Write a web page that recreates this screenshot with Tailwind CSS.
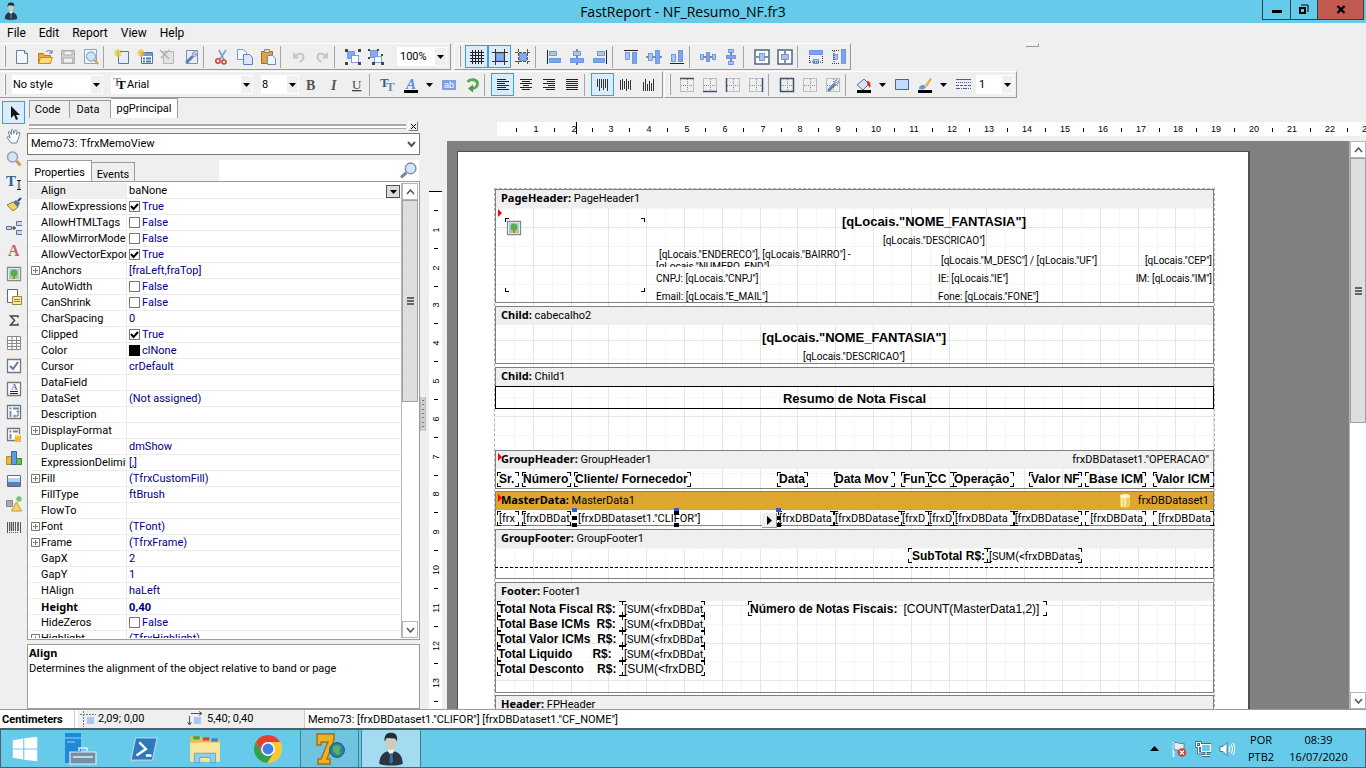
<!DOCTYPE html>
<html lang="en">
<head>
    <meta charset="UTF-8">
    <meta name="viewport" content="width=device-width, initial-scale=1.0">
    <title>FastReport - NF_Resumo_NF.fr3</title>
    <script src="https://cdn.jsdelivr.net/npm/@tailwindcss/browser@4"></script>
</head>
<body class="h-screen flex flex-col overflow-hidden bg-[#efefef] text-black text-[11px] leading-4 font-['Roboto','Liberation_Sans',sans-serif]">

    <!-- Title bar -->
    <header class="relative h-[23px] shrink-0 bg-[#66caea] flex items-center justify-center">
        <span class="absolute left-0.5 top-0.5" data-icon="person" data-size="18"></span>
        <h1 class="text-sm font-['Open_Sans',sans-serif]">FastReport - NF_Resumo_NF.fr3</h1>
        <div class="absolute right-0.5 top-0 h-5 flex border border-t-0 border-[#333f48]">
            <button aria-label="Minimize" class="w-7 border-r border-[#333f48] flex items-center justify-center"><span class="w-2.5 h-[3px] bg-black mt-1"></span></button>
            <button aria-label="Restore" class="w-[26px] flex items-center justify-center"><svg width="12" height="12" viewBox="0 0 12 12"><path d="M3 1h7v7" fill="none" stroke="#000"/><path d="M2 4h5v5H2z" fill="none" stroke="#000" stroke-width="2"/></svg></button>
            <button aria-label="Close" class="w-[46px] border-l border-[#333f48] bg-[#c35a50] flex items-center justify-center"><svg width="10" height="9" viewBox="0 0 10 9"><path d="M1.500 1l7 7M8.500 1l-7 7" stroke="#000" stroke-width="2.400"/></svg></button>
        </div>
    </header>

    <!-- Menu -->
    <nav class="h-5 shrink-0 flex items-center gap-[13px] pl-[7px] text-xs">
        <a href="#">File</a><a href="#">Edit</a><a href="#">Report</a><a href="#">View</a><a href="#">Help</a>
    </nav>

    <!-- Toolbars -->
    <div class="shrink-0 flex gap-[3px] h-[28px]">
        <div id="tbStandard" class="flex items-center border-t border-t-white border-b border-r border-[#9a9a9a] pr-[3px] h-[27px]"></div>
        <div id="tbAlign" class="flex items-center border-t border-l border-t-white border-l-white border-b border-r border-[#9a9a9a] h-[27px]"></div>
        <div class="w-[13px] h-1 ml-[172px] border-b border-r border-t border-t-white border-[#9a9a9a]"></div>
    </div>
    <div class="shrink-0 flex gap-px h-[27px]">
        <div id="tbText" class="flex items-center border-t border-t-white border-b border-r border-[#9a9a9a] h-[27px] pr-0.5"></div>
        <div id="tbFrame" class="flex items-center border-t border-l border-t-white border-l-white border-b border-r border-[#9a9a9a] pr-0.5 h-[27px]"></div>
    </div>

    <main class="flex-1 min-h-0 flex">
        <!-- Object tools -->
        <div id="tools" class="w-[27px] shrink-0 pt-[3px] pl-0.5 flex flex-col"></div>

        <!-- Left panel -->
        <section class="w-[393px] shrink-0 flex flex-col">
            <div class="flex items-end h-5 pl-0.5 shrink-0">
                <button class="h-[18px] w-[41px] border border-b-0 border-[#9b9b9b] pr-1">Code</button>
                <button class="h-[18px] w-[41px] border border-b-0 border-l-0 border-[#9b9b9b] pr-1">Data</button>
                <button class="h-5 w-[67px] border border-b-0 border-l-0 border-[#9b9b9b] bg-white">pgPrincipal</button>
            </div>
            <div class="h-[15px] shrink-0 flex items-center pt-px pl-0.5 gap-0.5 pr-0.5">
                <div class="flex-1 h-[5px] border-t-2 border-b border-[#a8a8a8] bg-white"></div>
                <button aria-label="Close panel" class="w-2.5 h-2.5 border border-white border-b-[#777] border-r-[#777] flex items-center justify-center"><svg width="7" height="7" viewBox="0 0 7 7"><path d="M1 1l5 5M6 1L1 6" stroke="#000"/></svg></button>
            </div>
            <div class="relative h-[22px] shrink-0">
                <select aria-label="Object" class="w-full h-full appearance-none bg-white border border-[#777] pl-[3px]"><option>Memo73: TfrxMemoView</option></select>
                <svg class="absolute right-1 top-2 pointer-events-none" width="9" height="7" viewBox="0 0 9 7"><path d="M1 1l3.500 4L8 1" fill="none" stroke="#555" stroke-width="2"/></svg>
            </div>
            <div class="h-[26px] shrink-0 flex items-end pr-px">
                <button class="h-[21px] w-[65px] border border-b-0 border-[#9b9b9b] bg-white pt-1">Properties</button>
                <button class="h-[19px] w-[43px] border border-b-0 border-l-0 border-[#9b9b9b] pt-1">Events</button>
                <div class="flex-1"></div>
                <div class="relative w-[200px] h-[21px] bg-white">
                    <input aria-label="Search" class="w-full h-full pr-5 outline-none">
                    <span class="absolute right-0.5 top-0.5" data-icon="search" data-size="17"></span>
                </div>
            </div>
            <div class="flex-1 min-h-0 flex border border-[#9b9b9b] bg-white p-px">
                <table class="block flex-1 overflow-hidden"><tbody id="props" class="block"></tbody></table>
                <div class="w-[17px] border-l border-[#b5b5b5] flex flex-col">
                    <button aria-label="Scroll up" class="h-[17px] shrink-0 border border-[#b5b5b5] flex items-center justify-center"><svg width="9" height="6" viewBox="0 0 9 6"><path d="M1 5l3.500-4L8 5" fill="none" stroke="#555" stroke-width="1.500"/></svg></button>
                    <div class="h-[202px] bg-[#dedede] border border-[#a0a0a0] flex flex-col items-center justify-center gap-px"><i class="w-[7px] h-0.5 bg-[#666]"></i><i class="w-[7px] h-0.5 bg-[#666]"></i><i class="w-[7px] h-0.5 bg-[#666]"></i></div>
                    <div class="flex-1"></div>
                    <button aria-label="Scroll down" class="h-[17px] shrink-0 border border-[#b5b5b5] flex items-center justify-center"><svg width="9" height="6" viewBox="0 0 9 6"><path d="M1 1l3.500 4L8 1" fill="none" stroke="#555" stroke-width="1.500"/></svg></button>
                </div>
            </div>
            <div class="mt-1 h-[65px] shrink-0 border border-[#9b9b9b] bg-white pl-px">
                <p class="font-bold font-['Noto_Sans',sans-serif]">Align</p>
                <p>Determines the alignment of the object relative to band or page</p>
            </div>
        </section>

        <!-- Splitter -->
        <div class="w-[7px] shrink-0 flex items-center pt-5"><div class="w-[6px] h-[34px] bg-[#cfcfcf] border-x border-[#bbb] flex flex-col items-center justify-evenly text-[#777]"><i class="w-0.5 h-px bg-current"></i><i class="w-0.5 h-px bg-current"></i><i class="w-0.5 h-px bg-current"></i><i class="w-0.5 h-px bg-current"></i><i class="w-0.5 h-px bg-current"></i><i class="w-0.5 h-px bg-current"></i><i class="w-0.5 h-px bg-current"></i></div></div>

        <!-- Designer -->
        <section class="flex-1 min-w-0 flex flex-col pt-6">
            <div class="h-[19px] shrink-0 pl-[70px]">
                <div id="hruler" class="relative h-3.5 bg-white overflow-hidden text-[9px] leading-[15px] font-['Liberation_Sans',sans-serif]"><i class="absolute left-[79px] top-0 w-px h-3 bg-black"></i></div>
            </div>
            <div class="flex-1 min-h-0 flex">
                <div class="w-5 shrink-0 pl-0.5 pt-[50px] flex">
                    <div id="vruler" class="relative w-[13px] bg-white border-t border-black overflow-hidden text-[9px] leading-[14px] font-['Liberation_Sans',sans-serif]"></div>
                </div>
                <div class="flex-1 min-w-0 bg-[#808080] pl-2.5 pt-2.5 overflow-hidden">
                    <div class="w-[793px] h-[1122px] bg-white border border-[#505050] border-r-2 pl-9 pt-9">
                        <div class="relative w-[721px] h-[1050px] border border-dashed border-[#b0b0b0]">
                            <svg id="grid" class="absolute left-0 top-0" width="719" height="1048" shape-rendering="crispEdges"></svg>
                            <div id="bands" class="relative w-[719px]"></div>
                        </div>
                    </div>
                </div>
                <div class="w-[17px] shrink-0 bg-white border-l border-[#b5b5b5] flex flex-col">
                    <button aria-label="Scroll up" class="h-[17px] shrink-0 border border-[#b5b5b5] flex items-center justify-center"><svg width="9" height="6" viewBox="0 0 9 6"><path d="M1 5l3.500-4L8 5" fill="none" stroke="#555" stroke-width="1.500"/></svg></button>
                    <div class="h-[265px] bg-[#dedede] border border-[#a0a0a0] flex flex-col items-center justify-center gap-px"><i class="w-[7px] h-0.5 bg-[#666]"></i><i class="w-[7px] h-0.5 bg-[#666]"></i><i class="w-[7px] h-0.5 bg-[#666]"></i></div>
                    <div class="flex-1"></div>
                    <button aria-label="Scroll down" class="h-[17px] shrink-0 border border-[#b5b5b5] flex items-center justify-center"><svg width="9" height="6" viewBox="0 0 9 6"><path d="M1 1l3.500 4L8 1" fill="none" stroke="#555" stroke-width="1.500"/></svg></button>
                </div>
            </div>
        </section>
    </main>

    <!-- Status bar -->
    <footer class="h-[19px] shrink-0 border-t border-[#9b9b9b] bg-white flex items-stretch leading-[20px]">
        <div class="w-[75px] shrink-0 pl-0.5 font-bold border-r border-[#ccc]">Centimeters</div>
        <div class="ml-[3px] w-[227px] shrink-0 bg-[#efefef] border-r border-[#ccc] flex items-center pl-0.5">
            <span data-icon="pos" data-size="16"></span><span class="w-[91px] pl-0.5">2,09; 0,00</span>
            <span data-icon="dim" data-size="16"></span><span class="pl-1">5,40; 0,40</span>
        </div>
        <div class="pl-[3px]">Memo73: [frxDBDataset1."CLIFOR"] [frxDBDataset1."CF_NOME"]</div>
    </footer>

    <!-- Taskbar -->
    <div class="h-10 shrink-0 border border-t-2 border-[#4f6068] bg-[#66caea] flex items-stretch">
        <button aria-label="Start" class="w-12 flex items-center justify-center" data-icon="windows" data-size="28"></button>
        <button aria-label="Server Manager" class="w-16 flex items-center justify-center" data-icon="server" data-size="32"></button>
        <button aria-label="PowerShell" class="w-[62px] flex items-center justify-center" data-icon="powershell" data-size="30"></button>
        <button aria-label="File Explorer" class="w-[60px] flex items-center justify-center" data-icon="explorer" data-size="34"></button>
        <button aria-label="Chrome" class="w-[65px] flex items-center justify-center" data-icon="chrome" data-size="30"></button>
        <button aria-label="Delphi 7" class="w-[59px] flex items-center justify-center border-x border-[#3f7e93] bg-[#6fc5e0]" data-icon="seven" data-size="32"></button>
        <button aria-label="FastReport" class="w-[60px] ml-0.5 flex items-center justify-center border-x border-[#3f7e93] bg-[#a3dcf1]" data-icon="person" data-size="34"></button>
        <div class="flex-1"></div>
        <div class="flex items-center gap-2 pr-0.5">
            <svg width="9" height="5" viewBox="0 0 9 5"><path d="M0 5l4.500-5L9 5z"/></svg>
            <span class="ml-1" data-icon="flag" data-size="16"></span>
            <span data-icon="network" data-size="16"></span>
            <span data-icon="speaker" data-size="16"></span>
        </div>
        <div class="w-12 text-center leading-[17px] pt-px font-['Open_Sans',sans-serif]">POR<br>PTB2</div>
        <div class="w-[67px] mr-[13px] text-center leading-[17px] pt-px font-['Open_Sans',sans-serif]">08:39<br>16/07/2020</div>
    </div>

    <script>
        // Icons, 16x16
        const L = '#a8c4f4', D = '#5d8ce0';
        const paper = '<path d="M2.500 1.500h8l3 3v10h-11z" fill="#f2f6fd" stroke="#6b7f9f"/><path d="M10.500 1.500v3h3" fill="#dde6f5" stroke="#6b7f9f"/>';
        const wrench = '<path d="M4 13l5-5" stroke="#5d7fb5" stroke-width="3" stroke-linecap="round"/><path d="M12.500 2.500l-2.200 2.200 1.200 1.300 2.200-2.200c.8 2.500-1.500 4.500-3.700 3.700-1.600-2.300.3-5.200 2.500-5z" fill="#c8d3e6" stroke="#6b7f9f" stroke-width=".7"/>';
        const star = '<path d="M4 0v8M0 4h8M1.200 1.200l5.600 5.600M6.800 1.200L1.200 6.800" stroke="#eac12f" stroke-width="1.200"/>';
        const box = (x, y, w, h, f) => `<rect x="${x}.5" y="${y}.5" width="${w}" height="${h}" fill="${f || L}" stroke="${D}" stroke-width=".8"/>`;
        const lines = (ws, al) => ws.map((w, i) => `<path d="M${al === 'r' ? 14 - w : al === 'c' ? 8 - w / 2 : 2} ${2.5 + i * 2}h${w}" stroke="#222"/>`).join('');
        const dots = '<path d="M1.500 1.500h13v13h-13zM8.500 2v12M2 8.500h12" fill="none" stroke="#888" stroke-dasharray="1 1"/>';
        const icons = {
            new: paper,
            open: '<path d="M1.500 4.500h5l1 2h6v8h-12z" fill="#e9a93a" stroke="#b97a1a"/><path d="M3.500 8.500h12l-2.500 6h-11.500z" fill="#fcdf7c" stroke="#c98b21"/><path d="M9 3c2-2 4-2 5.500.5M15 1v3h-3" fill="none" stroke="#4a6ea8"/>',
            save: '<path d="M1.500 1.500h13v13h-13z" fill="#d0d0d0" stroke="#aaa"/><path d="M4 2h8v4H4zM3.500 9h9v5h-9z" fill="#efefef" stroke="#b0b0b0"/>',
            preview: '<path d="M1.500.5h12v14h-12z" fill="#eef3fc" stroke="#8fa3c4"/><circle cx="8" cy="7.500" r="4.500" fill="#cfe3fa" stroke="#6f94c9"/><path d="M11.500 11l3.500 4" stroke="#d9a24a" stroke-width="2.400"/>',
            newpage: '<path d="M4.500 2.500h10v12h-10z" fill="#e6eefb" stroke="#5f7596"/>' + star,
            newdialog: '<path d="M4.500 3.500h11v11h-11z" fill="#fff" stroke="#4f74b0"/><path d="M5 4h10v3H5z" fill="#6f98dc"/><path d="M6 9.500h2M9 9.500h5M6 12.500h2M9 12.500h5" stroke="#4f74b0" stroke-width="2"/>' + star,
            del: '<path d="M3.500 2.500h10v12h-10z" fill="#e4e4e4" stroke="#b5b5b5"/><path d="M0 1l9 9M9 1L1 9" stroke="#b0b0b0" stroke-width="1.500"/>',
            pagesetup: '<path d="M3.500 1.500h11v13h-11z" fill="#e6eefb" stroke="#7b90b3"/>' + wrench,
            cut: '<path d="M5 1l5 10M12 1L6 10" stroke="#7fa5cf" stroke-width="1.800"/><circle cx="4" cy="12" r="2.200" fill="none" stroke="#d24232" stroke-width="1.600"/><circle cx="10" cy="13" r="2" fill="none" stroke="#d24232" stroke-width="1.600"/>',
            copy: '<path d="M.5.500h6l3 3v7h-9z" fill="#f4f8ff" stroke="#7d9ac9"/><path d="M6.500 5.500h6l3 3v7h-9z" fill="#dbe7fb" stroke="#5e7fb5"/>',
            paste: '<path d="M1.500 2.500h11v12h-11z" fill="#e0a146" stroke="#a86d1e"/><path d="M4.500.5h5v3h-5z" fill="#ddd" stroke="#888"/><path d="M7.500 6.500h5l3 3v6h-8z" fill="#eef4ff" stroke="#6b8ab8"/>',
            undo: '<path d="M3 4v4.500h4.500M4 8c2-4.500 8.500-4 8.500 0 0 2.500-1.500 4-4 5" fill="none" stroke="#c6c6c6" stroke-width="2"/>',
            redo: '<path d="M13 4v4.500H8.500M12 8C10 3.500 3.500 4 3.500 8c0 2.500 1.500 4 4 5" fill="none" stroke="#c6c6c6" stroke-width="2"/>',
            group: box(2, 2, 7, 7, '#86aaf0') + box(6, 6, 7, 7, '#fff') + '<path d="M0 0h3v3H0zM13 0h3v3h-3zM0 13h3v3H0zM13 13h3v3h-3z" fill="#444"/>',
            ungroup: box(2, 1, 7, 7, '#86aaf0') + box(6, 7, 7, 6, '#fff') + '<path d="M0 0h2v2H0zM9 0h2v2H9zM0 8h2v2H0zM13 5h2v2h-2zM4 13h3v3H4zM13 13h3v3h-3z" fill="#444"/>',
            grid: '<path d="M3.500 1v14M6.500 1v14M9.500 1v14M12.500 1v14M1 3.500h14M1 6.500h14M1 9.500h14M1 12.500h14" stroke="#222"/>',
            snap: '<path d="M3.500 0v16M12.500 0v16M0 3.500h16M0 12.500h16" stroke="#333"/>' + box(4, 4, 7, 7, '#86aaf0'),
            fit: '<path d="M3.500 0v16M12.500 0v16M0 3.500h16M0 12.500h16" stroke="#555" stroke-dasharray="3 1"/>' + box(4, 4, 7, 7, '#86aaf0'),
            aleft: '<path d="M1.500 1v14" stroke="#222"/>' + box(3, 2, 7, 4) + box(3, 9, 11, 4, '#7ea4ec'),
            acenter: '<path d="M8 0v16" stroke="#222"/>' + box(4, 2, 7, 4) + box(1, 9, 13, 4, '#7ea4ec'),
            aright: '<path d="M14.500 1v14" stroke="#222"/>' + box(5, 2, 7, 4) + box(1, 9, 11, 4, '#7ea4ec'),
            atop: '<path d="M1 1.500h14" stroke="#222"/>' + box(2, 3, 4, 7) + box(9, 3, 4, 11, '#7ea4ec'),
            amid: '<path d="M0 8h16" stroke="#222"/>' + box(2, 4, 4, 7) + box(9, 1, 4, 13, '#7ea4ec'),
            abot: '<path d="M1 14.500h14" stroke="#222"/>' + box(2, 5, 4, 7) + box(9, 1, 4, 11, '#7ea4ec'),
            hspace: '<path d="M0 8h16" stroke="#222"/>' + box(0, 5, 3, 5) + box(6, 3, 3, 9, '#7ea4ec') + box(12, 5, 3, 5),
            vspace: '<path d="M8 0v16" stroke="#222"/>' + box(5, 0, 5, 3) + box(3, 6, 9, 3, '#7ea4ec') + box(5, 12, 5, 3),
            hcenter: '<path d="M1 1h14v14H1z" fill="#fff" stroke="#53657f" stroke-width="1.500"/><path d="M2 8h12" stroke="#222"/>' + box(5, 4, 5, 7),
            vcenter: '<path d="M1 1h14v14H1z" fill="#fff" stroke="#53657f" stroke-width="1.500"/><path d="M8 2v12" stroke="#222"/>' + box(4, 5, 7, 5),
            samew: box(1, 1, 13, 4, '#7ea4ec') + box(5, 10, 5, 4) + '<path d="M1.500 7v7M14.500 7v7M2 13h12" stroke="#333" stroke-dasharray="1 1"/>',
            sameh: box(10, 0, 4, 14, '#7ea4ec') + box(2, 5, 4, 5) + '<path d="M1 1.500h8M1 14.500h8M3 2v12" stroke="#333" stroke-dasharray="1 1"/>',
            bold: '<text x="3" y="13" font-family="Liberation Serif" font-size="14" font-weight="bold" fill="#555">B</text>',
            italic: '<text x="5" y="13" font-family="Liberation Serif" font-size="14" font-style="italic" font-weight="bold" fill="#555">I</text>',
            underline: '<text x="3" y="12" font-family="Liberation Serif" font-size="13" text-decoration="underline" fill="#444">U</text>',
            fontdlg: '<text x="0" y="10" font-family="Liberation Serif" font-size="13" font-weight="bold" fill="#3d5a80">T</text><text x="6" y="14" font-family="Liberation Serif" font-size="13" font-weight="bold" fill="#6f8fb8">T</text>',
            truetype: '<text x="0" y="10" font-family="Liberation Serif" font-size="12" font-weight="bold" fill="#999">T</text><text x="4" y="13" font-family="Liberation Serif" font-size="13" font-weight="bold">T</text>',
            color: '<text x="3" y="12" font-family="Liberation Serif" font-size="15" font-weight="bold" font-style="italic" fill="#5f8fe0">A</text><path d="M1 13h14v3H1z"/>',
            ab: '<path d="M1 3h14v10H1z" fill="#7d9fe6"/><text x="3" y="11" font-family="Liberation Sans" font-size="9" fill="#fff">ab</text>',
            rotate: '<path d="M3.500 5c3-4 10-2.500 10 1.500 0 3-2 4.500-5 5" fill="none" stroke="#5aa854" stroke-width="2.800"/><path d="M9 7.500v8L4 11.500z" fill="#4a9a48"/>',
            tleft: lines([9, 12, 8, 12, 9, 12], 'l'), tcenter: lines([12, 8, 12, 6, 12, 8], 'c'), tright: lines([12, 8, 12, 7, 12, 9], 'r'), tjust: lines([12, 12, 12, 12, 12, 12], 'l'),
            vtop: '<path d="M2.500 2v8M4.500 2v12M6.500 2v9M8.500 2v11M10.500 2v9M12.500 2v12" stroke="#333"/>',
            vmid: '<path d="M2.500 3v10M4.500 2v11M6.500 4v8M8.500 2v12M10.500 4v8M12.500 3v10" stroke="#333"/>',
            vbot: '<path d="M2.500 5v9M4.500 2v12M6.500 7v7M8.500 4v10M10.500 6v8M12.500 2v12" stroke="#333"/>',
            ftop: dots + '<path d="M1 1.500h14" stroke="#3f5270" stroke-width="1.500"/>', fbot: dots + '<path d="M1 14.500h14" stroke="#3f5270" stroke-width="1.500"/>',
            fleft: dots + '<path d="M1.500 1v14" stroke="#3f5270" stroke-width="1.500"/>', fright: dots + '<path d="M14.500 1v14" stroke="#3f5270" stroke-width="1.500"/>',
            fall: dots + '<path d="M1.500 1.500h13v13h-13z" fill="none" stroke="#3f5270" stroke-width="1.500"/>', fnone: dots, fedit: dots + wrench,
            fill: '<path d="M1 8l7-6 5 5-6 6z" fill="#d8e3f2" stroke="#5c7190"/><path d="M11 4c4 0 4 4 3 7l-3-4z" fill="#d23a20"/><path d="M1 13h14v3H1z"/>',
            rect: '<path d="M1.500 2.500h13v10h-13z" fill="#c5dafa" stroke="#49679c"/>',
            pen: '<path d="M2 12c0-4 3-4 5-4l2 2c-1 2-3 3-7 2z" fill="#6f98c8"/><path d="M8 8l5-7 2 1-5 8z" fill="#e2b55c"/><path d="M1 13h14v3H1z"/>',
            style: '<path d="M1 2.500h15" stroke="#3f62a8"/><path d="M1 5.500h15" stroke="#3f62a8" stroke-dasharray="1 1"/><path d="M1 8.500h15" stroke="#3f62a8" stroke-dasharray="3 1"/><path d="M1 11.500h15" stroke="#3f62a8" stroke-dasharray="4 1 1 1"/>',
            arrow: '<path d="M5 1v12l3-3 2 5 2-1-2-4h4z" fill="#111"/>',
            hand: '<path d="M5 15L1 9.500c0-1.500 2-1 3 .5L2.500 4c.5-1.500 2-.5 2.800 2.500L5.500 2c.8-1.500 2-.5 2.300 3.500L9.500 2c1.500-.8 1.500 1 1 4.500l2.500-2.500c1.500 0 .5 3-.5 6l-2 5z" fill="#fff" stroke="#5b7395" stroke-width=".9"/>',
            zoom: '<circle cx="6.500" cy="6" r="5" fill="#d5e6fb" stroke="#93a4bb" stroke-width="1.500"/><path d="M10.500 10l4 4.500" stroke="#c9a04c" stroke-width="3"/>',
            search: '<circle cx="10" cy="6" r="5" fill="#d5e6fb" stroke="#7c8ea9" stroke-width="1.300"/><path d="M6 10l-5 4.500" stroke="#76889f" stroke-width="3"/>',
            textcur: '<text x="0" y="12" font-family="Liberation Serif" font-size="15" font-weight="bold" fill="#2f5f96">T</text><path d="M11 6.500h4M11 15.500h4M13 7v8" stroke="#222"/>',
            brush: '<path d="M1 8l6-3 5 5-5 4z" fill="#f3d45e" stroke="#8a7a3c"/><path d="M7 5l3-2 4 3-2 4z" fill="#5274ad"/><path d="M12 4l3-3" stroke="#445" stroke-width="2"/>',
            bands: '<path d="M.5 6.500h5v3h-5zM16 1.500h-5.500v4H16M16 10.500h-5.500v4H16" fill="#c5dafa" stroke="#5b7395"/><path d="M6 8h4M8 6v4" stroke="#222"/>',
            letterA: '<text x="2" y="13" font-family="Liberation Serif" font-size="16" font-weight="bold" fill="#d0605a">A</text>',
            picture: '<path d="M1.500 1.500h13v13h-13z" fill="#fff" stroke="#888" stroke-width="1.300"/><path d="M3 3h10v10H3z" fill="#9fd0f2"/><path d="M3 10h10v3H3z" fill="#a5cf8f"/><circle cx="8" cy="7" r="3.500" fill="#5cac4a"/><path d="M7 10h2v3H7z" fill="#c97c35"/>',
            subreport: '<path d="M1.500.5h10v13h-10z" fill="#fff" stroke="#667"/><path d="M6.500 7.500h9v8h-9z" fill="#fbe9a0" stroke="#9a8437"/><path d="M8 10.500h6M8 12.500h6" stroke="#9a8437"/>',
            sigma: '<path d="M12 5.500V4H4.500l4 4.500-4 4.500H12v-1.500" fill="none" stroke="#444" stroke-width="1.500"/>',
            table: '<path d="M1.500 1.500h13v13h-13zM1 5.500h14M1 8.500h14M1 11.500h14M6 1v14M10.500 1v14" fill="#fff" stroke="#888"/>',
            check: '<path d="M1.500 1.500h13v13h-13z" fill="#fff" stroke="#777" stroke-width="1.300"/><path d="M4 8l3 3 5-7" fill="none" stroke="#5478b8" stroke-width="2"/>',
            rich: '<path d="M1.500 1.500h13v13h-13z" fill="#fff" stroke="#777" stroke-width="1.300"/><text x="5" y="9" font-family="Liberation Serif" font-size="9" font-weight="bold" fill="#5478b8">A</text><path d="M4 10.500h8M4 12.500h8" stroke="#222"/>',
            cross: '<path d="M1.500 1.500h13v13h-13z" fill="#fff" stroke="#777" stroke-width="1.300"/><path d="M3.500 4.500h2M7 4.500h6M4.500 7v6" stroke="#5f86ba" stroke-width="1.800" fill="none"/><path d="M12 7v5H8M10.500 8L12 6.500 13.500 8M9 10.500L7.500 12 9 13.500" stroke="#4b6f9f" fill="none"/>',
            dbcross: '<path d="M1.500 1.500h12v12h-12z" fill="#fff" stroke="#777" stroke-width="1.300"/><path d="M3.500 4.500h2M7 4.500h5M4.500 7v5" stroke="#5f86ba" stroke-width="1.800"/><path d="M9 8h6v7H9z" fill="#f0bb3c"/><ellipse cx="12" cy="8" rx="3" ry="1.300" fill="#ffe9a5"/>',
            chart: '<path d="M.5 6.500h5v8h-5z" fill="#eab738" stroke="#b88a1a"/><path d="M5.500 1.500h5v13h-5z" fill="#5f9ae0" stroke="#3768a8"/><path d="M10.500 8.500h5v6h-5z" fill="#68bb5a" stroke="#3f8a3a"/>',
            gradient: '<path d="M1.500 2.500h13v11h-13z" fill="#fff" stroke="#667"/><path d="M2 5h12v4H2z" fill="#b5d2f3"/><path d="M2 9h12v4H2z" fill="#4f83bd"/>',
            shapes: '<path d="M.5 4.500h6v6h-6z" fill="#aaa" stroke="#888"/><circle cx="13" cy="3" r="2.700" fill="#79c279"/><path d="M10.500 6l5 9h-10z" fill="#f7d36a" stroke="#c99a2c"/>',
            barcode: '<path d="M1.500 3v11M3.500 3v9M7.500 3v9M9.500 3v9M14.500 3v11" stroke="#555"/><path d="M5.500 3v9M12 3v9" stroke="#555" stroke-width="1.600"/><path d="M3 13.500h10" stroke="#555" stroke-dasharray="1 1"/>',
            pos: '<path d="M0 3.500h16M3.500 0v16" stroke="#777" stroke-dasharray="2 1"/><path d="M7 6h7v7H7z" fill="#a9c6f5"/>',
            dim: '<path d="M4 2.500h11M12 .5l3 2-3 2M2.500 5v9M.5 11l2 3 2-3" fill="none" stroke="#555"/><path d="M7 6h7v7H7z" fill="#a9c6f5"/>',
            db: '<path d="M3 3v10c0 2 10 2 10 0V3z" fill="#f2cf5c"/><path d="M5 4v10M8 4v10" stroke="#fff3c0" stroke-width="1.500"/><ellipse cx="8" cy="3" rx="5" ry="2" fill="#fff6cf"/>',
            windows: '<path d="M1 3l6-1v5.700H1zM7.600 1.900L15 1v6.700H7.600zM1 8.300h6V14l-6-1zM7.600 8.300H15V15l-7.400-.9z" fill="#fff"/>',
            server: '<path d="M0 0h8v15H0z" fill="#2089d8"/><path d="M0 2.500h8M1 4.500h4" stroke="#9fd3f3" stroke-width=".6"/><path d="M2.500 9.500h13v6h-13z" fill="#7390a5" stroke="#dfeef5" stroke-width=".6"/><path d="M7 9V7.500h4V9M4 12h10" fill="none" stroke="#dfeef5" stroke-width=".7"/>',
            powershell: '<path d="M3.500 2H15l-2.500 12H1z" fill="#2d78b8" stroke="#a9cfe8" stroke-width=".7"/><path d="M5.500 4.500L9 8l-5 3.500M9 11.500h3" fill="none" stroke="#fff" stroke-width="1.300"/>',
            explorer: '<path d="M1 2h5l1 1.500h8V14H1z" fill="#e6be55"/><path d="M2.500 2h3v1.500h-3z" fill="#3aa353"/><path d="M7 2.500h3V4H7z" fill="#d0482f"/><path d="M11 3h3v1.500h-3z" fill="#2d85d0"/><path d="M1 5h14v9H1z" fill="#fae69c"/><path d="M3 14.500V10h10v4.500h-2.500V12h-5v2.500z" fill="#8fd0ee" stroke="#5c9fc8" stroke-width=".4"/>',
            chrome: '<circle cx="8" cy="8" r="7.500" fill="#fcc934"/><path d="M1.500 4.200A7.500 7.500 0 0 1 14.500 4.300H8L4.800 10z" fill="#e3412f"/><path d="M1.500 4.200A7.500 7.500 0 0 0 7.500 15.500L11.200 10H4.800z" fill="#30a152"/><circle cx="8" cy="8" r="3.700" fill="#fff"/><circle cx="8" cy="8" r="2.900" fill="#3f7fe8"/>',
            seven: '<path d="M1.500.5H10v3L6.500 13H8v2.500H2V13h1.500L7 4.500H3.500V6h-2z" fill="#edb127" stroke="#a66d10" stroke-width=".7"/><circle cx="11.500" cy="8.500" r="3.700" fill="#2e7fa5" stroke="#1f5570" stroke-width=".5"/><path d="M9.500 7l2-1 2 1-1 2 1 1-2 1-2-2z" fill="#57b35c"/>',
            person: '<path d="M2.500 15c0-4 2-5.500 4-6h3c2 .5 4 2 4 6-3 1-8 1-11 0z" fill="#2b3543"/><path d="M6.500 9L8 11l1.500-2L9 8H7z" fill="#f3f3f3"/><path d="M7.600 10h1l.4 4-.9 1-.9-1z" fill="#3f6fae"/><path d="M5.500 3.500h4.800c.2 3-1 5-2.300 5s-2.500-2-2.500-5z" fill="#dcc7b0"/><path d="M5 4.500C4.700 1.500 6 .4 8 .4s3.300 1 2.800 4.100L10 3 6 2.800z" fill="#2a2a30"/>',
            flag: '<path d="M2.500 1v15" stroke="#fff" stroke-width="1.500"/><path d="M3 2c3-2 5 2 10 0v7c-5 2-7-1-10 0z" fill="#dff2fa" stroke="#3f6070" stroke-width=".7"/><circle cx="11" cy="11.500" r="4.300" fill="#d83a2c"/><path d="M9 9.500l4 4M13 9.500l-4 4" stroke="#fff" stroke-width="1.400"/>',
            network: '<path d="M6.500 3.500h9v7h-9zM11 11v3M7 14.500h8" fill="none" stroke="#24505f" stroke-width="2.400"/><path d="M1.500 1.500h4v4h-4zM3.500 6v6h4" fill="none" stroke="#24505f" stroke-width="2.400"/><path d="M6.500 3.500h9v7h-9zM11 11v3M7 14.500h8" fill="#66caea" stroke="#fff" stroke-width="1.200"/><path d="M1.500 1.500h4v4h-4zM3.500 6v6h4" fill="none" stroke="#fff" stroke-width="1.200"/>',
            speaker: '<path d="M1 5.500h3l4-4v13l-4-4H1z" fill="#fff" stroke="#34606f" stroke-width=".8"/><path d="M10 5c1 2 1 4 0 6M12 3.500c2 3 2 6 0 9M14 2c2.500 4 2.500 8 0 12" fill="none" stroke="#fff" stroke-width="1.100"/>'
        };
        const svg = (name, size = 16) => `<svg class="block shrink-0" width="${size}" height="${size}" viewBox="0 0 16 16">${icons[name]}</svg>`;
        document.querySelectorAll('[data-icon]').forEach(el => { el.innerHTML = svg(el.dataset.icon, el.dataset.size); });

        // Toolbars: "|" separator, "*" pressed, "v" small drop-down arrow, "#" combo box
        const caret = '<svg class="pointer-events-none" width="7" height="4" viewBox="0 0 7 4"><path d="M0 0h7L3.500 4z"/></svg>';
        const combos = {
            zoom: ['ml-[10px] w-[50px]', 'pl-[3px]', '100%', 'Zoom'], style: ['ml-0.5 w-[91px]', 'pl-px', 'No style', 'Style'],
            font: ['ml-2 w-[142px]', 'pl-4', 'Arial', 'Font'], size: ['ml-2 w-[38px]', 'pl-px', '8', 'Font size'], width: ['ml-0.5 w-[38px]', 'pl-[3px]', '1', 'Frame width']
        };
        function toolbar(id, spec) {
            document.getElementById(id).innerHTML = '<i class="h-[21px] w-0.5 mx-1 border-l border-l-white border-r border-r-[#9a9a9a]"></i>' + spec.split(' ').map(t => {
                if (t === '|') return '<i class="w-2 h-[22px] shrink-0"><b class="block w-px h-full bg-[#a5a5a5] ml-px"></b></i>';
                if (t === 'v') return `<button aria-label="More" class="w-[15px] h-[23px] flex items-center justify-center">${caret}</button>`;
                if (t[0] === '#') {
                    const [box, pad, text, label] = combos[t.slice(1)];
                    const tt = t === '#font' ? `<span class="absolute left-0.5 top-px">${svg('truetype')}</span>` : '';
                    return `<span class="relative h-[19px] bg-white ${box}"><select aria-label="${label}" class="appearance-none w-full h-full leading-[19px] ${pad}"><option>${text}</option></select>${tt}<span class="absolute right-px top-px bottom-px w-[11px] bg-[#efefef] flex items-center justify-center pointer-events-none">${caret}</span></span>`;
                }
                const on = t[0] === '*', name = t.replace('*', '');
                return `<button aria-label="${name}" class="w-[23px] h-[23px] flex items-center justify-center ${on ? 'border border-[#35a3dd] bg-[#dcebfc]' : ''}">${svg(name)}</button>`;
            }).join('');
        }
        toolbar('tbStandard', 'new open save preview | newpage newdialog del pagesetup | cut copy paste | undo redo | group ungroup #zoom');
        toolbar('tbAlign', '*grid *snap fit | aleft acenter aright | atop amid abot | hspace vspace | hcenter vcenter | samew sameh');
        toolbar('tbText', '#style #font #size bold italic underline | fontdlg color v ab rotate | *tleft tcenter tright tjust | *vtop vmid vbot');
        toolbar('tbFrame', 'ftop fbot fleft fright | fall fnone fedit | fill v rect pen v style #width');
        document.getElementById('tools').innerHTML = 'arrow hand zoom textcur brush bands letterA picture subreport sigma table check rich cross dbcross chart gradient shapes barcode'.split(' ')
            .map((n, i) => `<button aria-label="${n}" class="w-[23px] h-[23px] flex items-center justify-center ${i ? '' : 'border border-[#35a3dd] bg-[#dcebfc]'}">${svg(n)}</button>`).join('');

        // Property grid: "+" expandable row, value true/false is a tick box
        const props = [['Align', 'baNone'], ['AllowExpressions', true], ['AllowHTMLTags', false], ['AllowMirrorMode', false], ['AllowVectorExport', true],
            ['+Anchors', '[fraLeft,fraTop]'], ['AutoWidth', false], ['CanShrink', false], ['CharSpacing', '0'], ['Clipped', true], ['Color', 'clNone'], ['Cursor', 'crDefault'],
            ['DataField', ''], ['DataSet', '(Not assigned)'], ['Description', ''], ['+DisplayFormat', ''], ['Duplicates', 'dmShow'], ['ExpressionDelimiters', '[,]'],
            ['+Fill', '(TfrxCustomFill)'], ['FillType', 'ftBrush'], ['FlowTo', ''], ['+Font', '(TFont)'], ['+Frame', '(TfrxFrame)'], ['GapX', '2'], ['GapY', '1'],
            ['HAlign', 'haLeft'], ['Height', '0,40'], ['HideZeros', false], ['+Highlight', '(TfrxHighlight)']];
        document.getElementById('props').innerHTML = props.map(([n, v], i) => {
            const plus = n[0] === '+', name = n.replace('+', '');
            let val = v;
            if (typeof v === 'boolean') val = `<input type="checkbox" id="p${i}" ${v ? 'checked' : ''} class="peer appearance-none w-[11px] h-[11px] border border-[#777] shrink-0"><svg class="absolute left-[3px] top-1 hidden peer-checked:block pointer-events-none" width="9" height="8" viewBox="0 0 9 8"><path d="M1 3l2.500 3L8 1" fill="none" stroke="#000" stroke-width="2"/></svg><label for="p${i}" class="pl-0.5">${v ? 'True' : 'False'}</label>`;
            if (name === 'Color') val = '<i class="w-[11px] h-[11px] bg-black shrink-0 mr-0.5"></i>clNone';
            const drop = i ? '' : `<button aria-label="Choose" class="absolute right-px top-0.5 w-3.5 h-[13px] border border-[#555] bg-[#ddd] flex items-center justify-center">${caret}</button>`;
            return `<tr class="flex h-4 border-b border-[#ececec] ${name === 'Height' ? "font-bold font-['Noto_Sans',sans-serif]" : ''}">
                <th class="relative block w-[98px] shrink-0 h-[15px] overflow-hidden text-left whitespace-nowrap pl-3 border-r border-[#ececec] ${name === 'Height' ? 'font-bold' : 'font-normal'} ${i ? '' : 'bg-[#efefef]'}">${plus ? '<svg class="absolute left-0.5 top-[3px]" width="9" height="9" viewBox="0 0 9 9"><path d="M.5.5h8v8h-8zM2 4.500h5M4.500 2v5" fill="none" stroke="#777"/></svg>' : ''}${name}</th>
                <td class="relative flex flex-1 h-[15px] items-center pl-0.5 whitespace-nowrap ${i ? 'text-[#000080]' : ''}">${val}${drop}</td></tr>`;
        }).join('');

        // Rulers and page grid, one centimetre is 37.8 pixels
        const CM = 37.8;
        let h = '', v = '', g = '';
        for (let i = 0; i < 24; i++) {
            const p = Math.round(i * CM + 1), half = Math.round((i + 0.5) * CM);
            if (i) h += `<span class="absolute top-0 w-5 text-center" style="left:${p - 10}px">${i}</span>`;
            h += `<i class="absolute top-1.5 w-px h-1 bg-black" style="left:${half}px"></i>`;
            if (i > 0 && i < 14) v += `<span class="absolute left-0 w-3.5 h-3.5 text-center -rotate-90" style="top:${p - 8}px">${i}</span>`;
            v += `<i class="absolute left-[5px] h-px w-1 bg-black" style="top:${half - 1}px"></i>`;
        }
        for (let i = 1; i < 60; i++) {
            const p = Math.round(i * CM / 2) + 0.5;
            const c = i % 2 ? '#f6f6f6' : '#e6e6e6';
            g += `<path d="M${p} 0V1048M0 ${p}H719" stroke="${c}"/>`;
        }
        document.getElementById('hruler').innerHTML += h;
        document.getElementById('vruler').innerHTML = v;
        document.getElementById('grid').innerHTML = g;

        // Report objects: [left, top, width, height, text, classes, corner marks]
        const big = "font-bold text-[13px] text-center font-['Liberation_Sans',sans-serif]";
        const narrow = 'text-[10px]';
        const bold = "font-bold text-xs font-['Liberation_Sans',sans-serif]";
        const cell = 'text-[11px]';
        const obj = ([x, y, w, ht, text, cls, marks]) => `<div class="absolute whitespace-pre leading-[15px] ${cls}" style="left:${x}px;top:${y}px;width:${w}px;height:${ht}px">${marks ? `<svg class="absolute left-0 top-0 overflow-visible" width="${w}" height="${ht}" shape-rendering="crispEdges"><path fill="none" stroke="#000" d="M.5 4V.5H4M${w - 3} .5H${w + 0.5}V4M${w + 0.5} ${ht - 4}V${ht - 0.5}H${w - 3}M4 ${ht - 0.5}H.5V${ht - 4}"/></svg>` : ''}${text}</div>`;
        const red = top => `<svg class="absolute left-0.5" style="top:${top}px" width="4" height="8" viewBox="0 0 4 8"><path d="M0 0l4 4-4 4z" fill="#f00"/></svg>`;
        const knob = (x, y, c) => `<i class="absolute w-[5px] h-1 ${c}" style="left:${x}px;top:${y}px"></i>`;
        const row = (y, cells, cls) => cells.map(([x, w, t, al]) => obj([x, y, w, 15, t, cls + ' ' + (al || 'pl-0.5'), true])).join('');
        const total = (i, label, value, cls) => obj([1, 18 + i * 15, 125, 15, label, bold + ' pt-px pl-px', true]) + obj([126, 18 + i * 15, 82, 15, value, cls + ' pt-px pl-0.5', true]);
        const bands = [
            ['PageHeader', 'PageHeader1', 'h-[114px] mb-[3px]', '', red(19) +
                obj([9, 28, 139, 74, '', '', true]) + `<span class="absolute left-[10px] top-[30px]">${svg('picture')}</span>` +
                obj([336, 24, 204, 15, '[qLocais."NOME_FANTASIA"]', big]) + obj([336, 43, 204, 15, '[qLocais."DESCRICAO"]', narrow + ' text-center']) +
                obj([163, 57, 220, 15, '[qLocais."ENDERECO"], [qLocais."BAIRRO"] -', narrow]) + obj([160, 69, 220, 8, '[qLocais."NUMERO_END"]', narrow + ' overflow-hidden']) +
                obj([445, 63, 160, 15, '[qLocais."M_DESC"] / [qLocais."UF"]', narrow]) + obj([616, 63, 100, 15, '[qLocais."CEP"]', narrow + ' text-right']) +
                obj([160, 81, 200, 15, 'CNPJ: [qLocais."CNPJ"]', narrow]) + obj([442, 81, 160, 15, 'IE: [qLocais."IE"]', narrow]) + obj([616, 81, 100, 15, 'IM: [qLocais."IM"]', narrow + ' text-right']) +
                obj([160, 99, 200, 13, 'Email: [qLocais."E_MAIL"]', narrow]) + obj([442, 99, 160, 13, 'Fone: [qLocais."FONE"]', narrow])],
            ['Child', 'cabecalho2', 'h-[58px] mb-[3px]', '', obj([256, 23, 204, 15, '[qLocais."NOME_FANTASIA"]', big]) + obj([256, 42, 204, 15, '[qLocais."DESCRICAO"]', narrow + ' text-center'])],
            ['Child', 'Child1', 'h-[42px] mb-[41px]', '', obj([-1, 18, 719, 23, 'Resumo de Nota Fiscal', 'border border-black pt-1 ' + big])],
            ['GroupHeader', 'GroupHeader1', 'h-[39px] mb-0.5', '<span class="absolute right-1 top-0 leading-[18px]">frxDBDataset1."OPERACAO"</span>', red(2) +
                row(21, [[1, 21, 'Sr.'], [26, 48, 'Número', 'pl-px'], [78, 116, 'Cliente/ Fornecedor', 'pl-px'], [281, 30, 'Data'], [338, 60, 'Data Mov', 'pl-px'], [405, 27, 'Fun'], [432, 25, 'CC', 'pl-px'], [457, 60, 'Operação', 'pl-px'], [533, 52, 'Valor NF', 'pl-0.5'], [589, 60, 'Base ICM', 'pl-1'], [657, 60, 'Valor ICM', 'pl-0.5']], bold)],
            ['MasterData', 'MasterData1', 'h-[35px] mb-[3px]', `<span class="absolute right-[80px] top-px">${svg('db')}</span><span class="absolute right-1 top-0 leading-[18px]">frxDBDataset1</span>`, red(2) +
                row(19, [[1, 21, '[frx'], [26, 48, '[frxDBDat', 'pl-px'], [282, 55, '[frxDBData', 'pl-px'], [338, 67, '[frxDBDatase', 'pl-px'], [405, 27, '[frxD', 'pl-px'], [432, 25, '[frxD', 'pl-px'], [457, 60, '[frxDBData'], [518, 67, '[frxDBDatase', 'text-right pr-0.5'], [589, 60, '[frxDBData', 'text-right pr-0.5'], [657, 60, '[frxDBData', 'text-right pr-0.5']], cell) +
                obj([80, 19, 200, 15, '[frxDBDataset1."CLIFOR"]', cell + ' pl-0.5']) +
                [76, 178, 280].map(x => knob(x, 16, 'bg-[#2b5fc9]') + knob(x, 31, 'bg-black')).join('') + knob(76, 24, 'bg-black') + knob(280, 24, 'bg-black') + knob(178, 19, 'bg-black') +
                '<button aria-label="Open menu" class="absolute left-[266px] top-[21px] w-[15px] h-[15px] bg-[#efefef] border-b border-r border-[#999] flex items-center justify-center"><svg width="5" height="9" viewBox="0 0 5 9"><path d="M0 0l5 4.500L0 9z"/></svg></button>'],
            ['GroupFooter', 'GroupFooter1', 'h-[50px] mb-[3px]', '', '<i class="absolute -left-px right-0 top-[37px] border-t border-dashed border-black"></i>' +
                obj([412, 18, 79, 15, 'SubTotal R$:', bold + ' pt-px pl-1', true]) + obj([491, 18, 94, 15, '[SUM(&lt;frxDBDatas', cell + ' pt-px pl-0.5', true])],
            ['Footer', 'Footer1', 'h-[111px] mb-0.5', '', total(0, 'Total Nota Fiscal R$:', '[SUM(&lt;frxDBDat', cell) + total(1, 'Total Base ICMs  R$:', '[SUM(&lt;frxDBDat', cell) +
                total(2, 'Total Valor ICMs  R$:', '[SUM(&lt;frxDBDat', cell) + total(3, 'Total Liquido      R$:', '[SUM(&lt;frxDBDat', cell) + total(4, 'Total Desconto    R$:', '[SUM(&lt;frxDBD', "text-xs font-['Liberation_Sans',sans-serif]") +
                obj([252, 18, 298, 15, 'Número de Notas Fiscais:<span class="font-normal pl-1.5">[COUNT(MasterData1,2)]</span>', bold + ' pt-px pl-0.5', true])],
            ['Header', 'FPHeader', 'h-[60px]', '', '']
        ];
        document.getElementById('bands').innerHTML = bands.map(([type, name, size, extra, body]) =>
            `<section class="relative border border-[#808080] ${size}"><h2 class="relative h-[18px] leading-[15px] pl-[5px] ${type === 'MasterData' ? 'bg-[#dfa62f]' : 'bg-[#efefef]'}"><b class="font-['Noto_Sans',sans-serif]">${type}:</b> ${name}${extra}</h2>${body}</section>`).join('');
    </script>
</body>
</html>
